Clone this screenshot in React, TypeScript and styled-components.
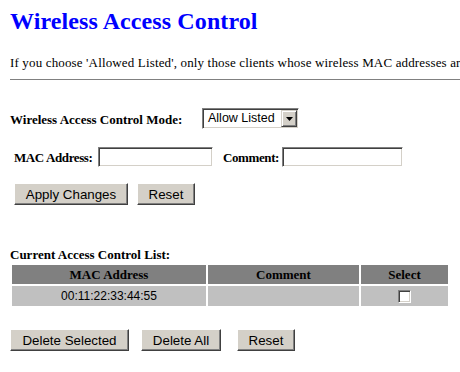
import React from "react";
import styled, { createGlobalStyle } from "styled-components";

const GlobalStyle = createGlobalStyle`
  html, body { margin: 0; padding: 0; background: #ffffff; }
  body {
    font-family: "Liberation Serif", "Times New Roman", serif;
    color: #000000;
    overflow: hidden;
  }
`;

const Page = styled.div`
  width: 460px;
  height: 372px;
  overflow: hidden;
  padding-left: 10px;
  box-sizing: border-box;
`;

const Title = styled.h1`
  margin: 7px 0 0;
  font-size: 24px;
  line-height: 28px;
  font-weight: bold;
  color: #0000ff;
  white-space: nowrap;
  letter-spacing: 0.1px;
`;

const IntroClip = styled.div`
  margin-top: 20px;
  width: 450px;
  overflow: hidden;
`;

const Intro = styled.p`
  margin: 0;
  font-size: 13px;
  line-height: 16px;
  letter-spacing: 0.15px;
  white-space: nowrap;
`;

const Rule = styled.div`
  margin-top: 8px;
  width: 500px;
  height: 1px;
  background: #808080;
`;

const FieldRow = styled.div<{ $top: number; $indent?: number }>`
  display: flex;
  align-items: flex-start;
  margin-top: ${(p) => p.$top}px;
  padding-left: ${(p) => p.$indent ?? 0}px;
`;

const Label = styled.span<{ $w: number; $pad: number; $ml?: number; $tight?: boolean }>`
  flex: none;
  width: ${(p) => p.$w}px;
  margin-left: ${(p) => p.$ml ?? 0}px;
  padding-top: ${(p) => p.$pad}px;
  font-size: 13px;
  line-height: 16px;
  font-weight: bold;
  letter-spacing: ${(p) => (p.$tight ? "-0.4px" : "0")};
  white-space: nowrap;
`;

const Combo = styled.div`
  flex: none;
  width: 97px;
  height: 21px;
  box-sizing: border-box;
  display: flex;
  align-items: stretch;
  padding: 1px;
  border: 1px solid;
  border-color: #808080 #ffffff #ffffff #808080;
  box-shadow: inset 1px 1px #404040, inset -1px -1px #d4d0c8;
  background: #ffffff;
`;

const ComboText = styled.span`
  flex: 1;
  padding-left: 4px;
  font-family: "Liberation Sans", Arial, sans-serif;
  font-size: 12.5px;
  line-height: 17px;
  white-space: nowrap;
`;

const ArrowButton = styled.span`
  flex: none;
  width: 16px;
  height: 17px;
  box-sizing: border-box;
  display: flex;
  align-items: center;
  justify-content: center;
  background: #d4d0c8;
  border: 1px solid;
  border-color: #d4d0c8 #404040 #404040 #d4d0c8;
  box-shadow: inset 1px 1px #ffffff, inset -1px -1px #808080;
`;

const TextBox = styled.input<{ $w: number }>`
  flex: none;
  width: ${(p) => p.$w}px;
  height: 20px;
  box-sizing: border-box;
  margin: 0;
  padding: 0 2px;
  border: 1px solid;
  border-color: #808080 #ffffff #ffffff #808080;
  box-shadow: inset 1px 1px #404040, inset -1px -1px #d4d0c8;
  background: #ffffff;
  font-family: "Liberation Sans", Arial, sans-serif;
  font-size: 13px;
  outline: none;
`;

const ButtonRow = styled.div<{ $top: number; $indent?: number }>`
  display: flex;
  margin-top: ${(p) => p.$top}px;
  padding-left: ${(p) => p.$indent ?? 0}px;
`;

const Button = styled.button<{ $w: number; $ml?: number }>`
  flex: none;
  width: ${(p) => p.$w}px;
  height: 22px;
  margin: 0 0 0 ${(p) => p.$ml ?? 0}px;
  padding: 0;
  box-sizing: border-box;
  background: #d4d0c8;
  border: 1px solid;
  border-color: #ffffff #404040 #404040 #ffffff;
  box-shadow: inset -1px -1px #808080, inset 1px 1px #d4d0c8;
  font-family: "Liberation Sans", Arial, sans-serif;
  font-size: 13.33px;
  color: #000000;
  white-space: nowrap;
`;

const ListLabel = styled.div`
  margin-top: 42px;
  font-size: 13px;
  line-height: 16px;
  font-weight: bold;
`;

const ListTable = styled.table`
  width: 440px;
  margin: 0;
  border-collapse: separate;
  border-spacing: 2px;
  table-layout: fixed;
`;

const HeadCell = styled.th<{ $w: number }>`
  width: ${(p) => p.$w}px;
  height: 19px;
  padding: 0;
  background: #808080;
  text-align: center;
  font-family: "Liberation Serif", "Times New Roman", serif;
  font-size: 13px;
  font-weight: bold;
`;

const Cell = styled.td`
  height: 20px;
  padding: 0;
  background: #c0c0c0;
  text-align: center;
  font-family: "Liberation Sans", Arial, sans-serif;
  font-size: 12px;
`;

const Check = styled.input`
  appearance: none;
  -webkit-appearance: none;
  display: block;
  width: 13px;
  height: 13px;
  margin: 0 auto;
  box-sizing: border-box;
  border: 1px solid;
  border-color: #808080 #ffffff #ffffff #808080;
  box-shadow: inset 1px 1px #404040, inset -1px -1px #d4d0c8;
  background: #ffffff;
`;

export default function App() {
  return (
    <>
      <GlobalStyle />
      <Page>
        <Title>Wireless Access Control</Title>
        <IntroClip>
          <Intro>
            If you choose 'Allowed Listed', only those clients whose wireless MAC addresses are in the access control list will be able to connect to your Access Point.
          </Intro>
        </IntroClip>
        <Rule />

        <FieldRow $top={28}>
          <Label $w={192} $pad={4}>Wireless Access Control Mode:</Label>
          <Combo>
            <ComboText>Allow Listed</ComboText>
            <ArrowButton>
              <svg width="7" height="4" viewBox="0 0 7 4">
                <path d="M0 0h7L3.5 4z" fill="#000" />
              </svg>
            </ArrowButton>
          </Combo>
        </FieldRow>

        <FieldRow $top={18} $indent={4}>
          <Label $w={84} $pad={3} $tight>MAC Address:</Label>
          <TextBox $w={115} defaultValue="" />
          <Label $w={59} $pad={3} $ml={10} $tight>Comment:</Label>
          <TextBox $w={121} defaultValue="" />
        </FieldRow>

        <ButtonRow $top={16} $indent={4}>
          <Button $w={114}>Apply Changes</Button>
          <Button $w={58} $ml={9}>Reset</Button>
        </ButtonRow>

        <ListLabel>Current Access Control List:</ListLabel>
        <ListTable>
          <thead>
            <tr>
              <HeadCell $w={194}>MAC Address</HeadCell>
              <HeadCell $w={151}>Comment</HeadCell>
              <HeadCell $w={87}>Select</HeadCell>
            </tr>
          </thead>
          <tbody>
            <tr>
              <Cell>00:11:22:33:44:55</Cell>
              <Cell></Cell>
              <Cell>
                <Check type="checkbox" />
              </Cell>
            </tr>
          </tbody>
        </ListTable>

        <ButtonRow $top={21}>
          <Button $w={119}>Delete Selected</Button>
          <Button $w={80} $ml={12}>Delete All</Button>
          <Button $w={58} $ml={16}>Reset</Button>
        </ButtonRow>
      </Page>
    </>
  );
}
